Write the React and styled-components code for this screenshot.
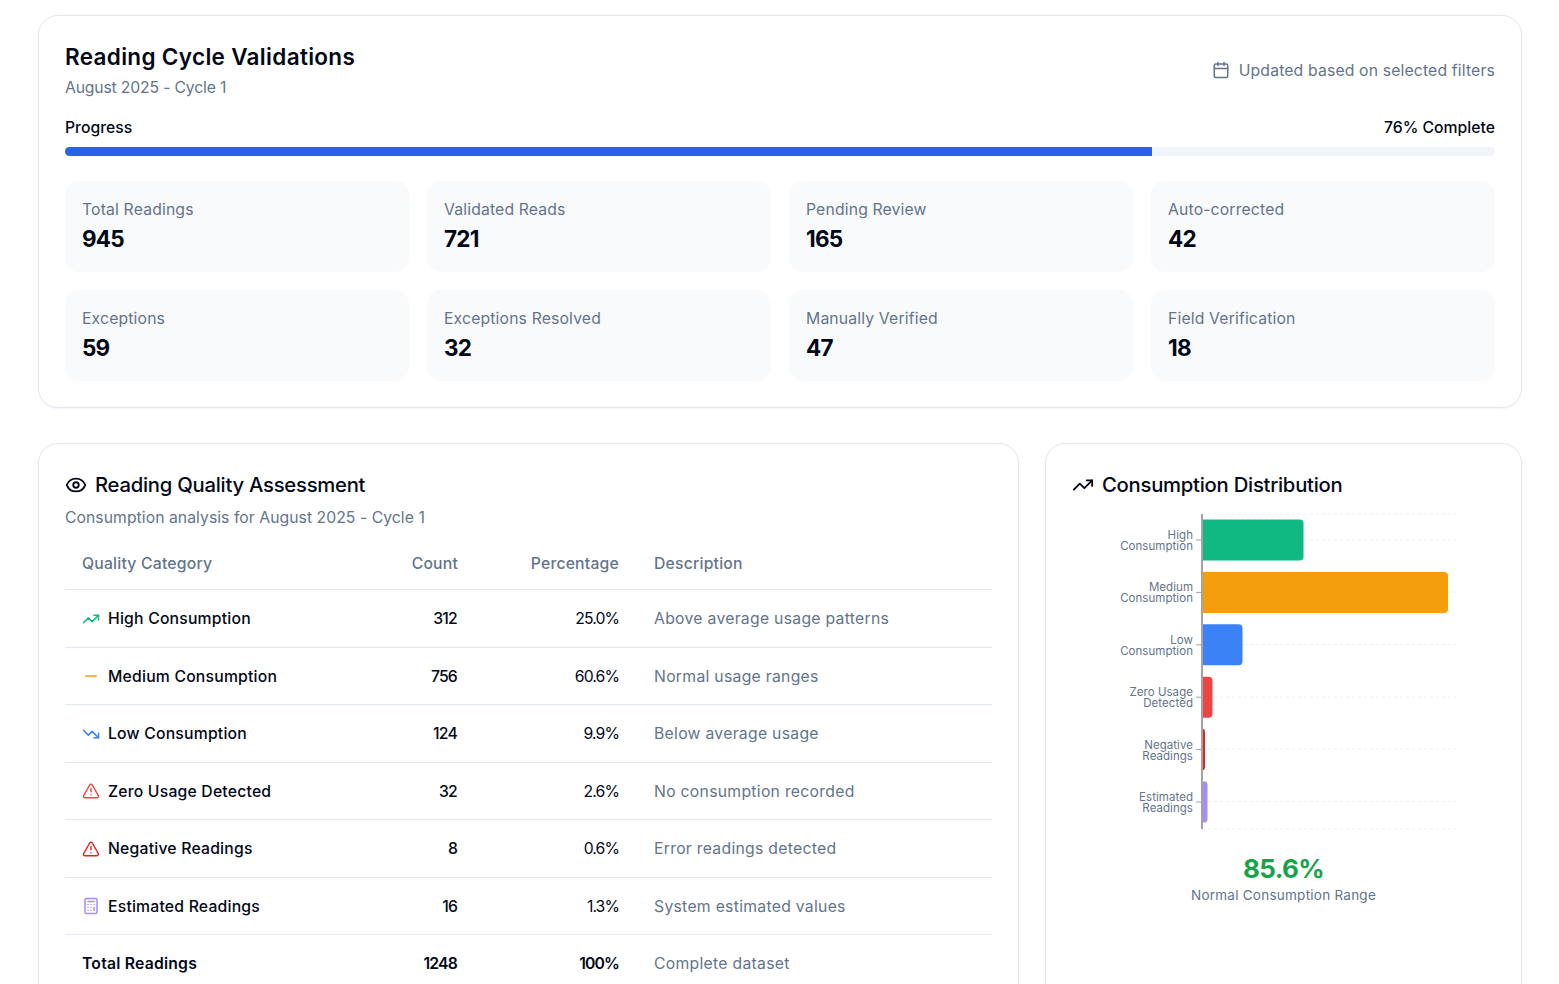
import styled, { createGlobalStyle } from "styled-components";
import { Calendar, Eye, TrendingUp, TrendingDown, Minus, TriangleAlert, Calculator } from "lucide-react";

const GlobalStyle = createGlobalStyle`
  html, body { margin: 0; padding: 0; background: #fff; height: 984px; overflow: hidden; }
  body { font-family: "Inter", "Open Sans", sans-serif; color: #020817; }
`;

const Page = styled.div`
  display: flex;
  flex-direction: column;
  gap: 35.5px;
  padding: 15px 37px 0 38px;
`;

const Card = styled.section`
  background: #fff;
  border: 1px solid #e2e8f0;
  border-radius: 20px;
  padding: 27px 26px 26px;
  box-shadow: 0 1px 2px rgba(15, 23, 42, 0.04);
`;

const CycleHead = styled.div`
  display: flex;
  justify-content: space-between;
  align-items: center;
`;

const Title = styled.h2`
  margin: 0;
  font-size: 22.5px;
  line-height: 28px;
  font-weight: 600;
  letter-spacing: 0.32px;
`;

const Sub = styled.p`
  margin: ${(p) => p.$top}px 0 0;
  font-size: 15.75px;
  line-height: 26px;
  color: #64748b;
  letter-spacing: ${(p) => p.$track}px;
`;

const Updated = styled.div`
  display: flex;
  align-items: center;
  gap: 9px;
  margin-bottom: 4px;
  font-size: 15.75px;
  color: #64748b;
  letter-spacing: 0.15px;
`;

const ProgressHead = styled.div`
  display: flex;
  justify-content: space-between;
  margin-top: 15px;
  font-size: 15.75px;
  line-height: 24px;
  font-weight: 500;
`;

const Track = styled.div`
  height: 9px;
  margin-top: 7px;
  border-radius: 9px;
  background: #f1f5f9;
  overflow: hidden;
`;

const Fill = styled.div`
  height: 100%;
  width: ${(p) => p.$pct}%;
  background: #2563eb;
`;

const StatGrid = styled.div`
  display: grid;
  grid-template-columns: repeat(4, 1fr);
  gap: 18.5px 18px;
  margin-top: 25px;
`;

const Stat = styled.div`
  height: 90.5px;
  box-sizing: border-box;
  padding: 17px 17px 0;
  border-radius: 14px;
  background: #f9fafb;
`;

const StatLabel = styled.div`
  font-size: 15.75px;
  line-height: 24px;
  color: #64748b;
  letter-spacing: 0.15px;
`;

const StatValue = styled.div`
  margin-top: 1px;
  font-size: 22.5px;
  line-height: 32px;
  font-weight: 700;
  letter-spacing: -0.8px;
`;

const Bottom = styled.div`
  display: grid;
  grid-template-columns: 981px 477px;
  gap: 26px;
`;

const CardHead = styled.div`
  display: flex;
  align-items: center;
  gap: 8px;
`;

const CardTitle = styled.h3`
  margin: 0;
  font-size: 20.25px;
  line-height: 28px;
  font-weight: 500;
  letter-spacing: -0.25px;
`;

const Table = styled.div`
  margin-top: 7px;
`;

const Row = styled.div`
  display: grid;
  grid-template-columns: 311px 100px 161px 1fr;
  align-items: center;
  height: ${(p) => (p.$head ? "52px" : "57.5px")};
  box-sizing: border-box;
  padding-top: ${(p) => (p.$head || p.$last ? 0 : 1)}px;
  border-bottom: ${(p) => (p.$last ? "none" : "1px solid #e2e8f0")};
  font-size: 15.75px;
`;

const Category = styled.div`
  display: flex;
  align-items: center;
  gap: 8px;
  padding-left: 17px;
  font-weight: ${(p) => (p.$total ? 600 : 500)};
  letter-spacing: 0.2px;
`;

const Count = styled.div`
  padding-right: 19px;
  text-align: right;
  font-weight: ${(p) => (p.$total ? 600 : 500)};
  letter-spacing: -0.8px;
`;

const Share = styled.div`
  padding-right: 18px;
  text-align: right;
  font-weight: ${(p) => (p.$total ? 600 : 400)};
  letter-spacing: -0.9px;
`;

const Desc = styled.div`
  padding-left: 17px;
  color: #64748b;
  letter-spacing: 0.28px;
`;

const HeadCell = styled.div`
  padding: ${(p) => (p.$right ? "0 18px 0 0" : "0 0 0 17px")};
  text-align: ${(p) => (p.$right ? "right" : "left")};
  color: #64748b;
  font-weight: 500;
  letter-spacing: 0.2px;
`;

const ChartSvg = styled.svg`
  display: block;
  width: 423px;
  height: 330px;
  margin-top: 11px;
`;

const AxisLabel = styled.text`
  font-size: 11.5px;
  fill: #64748b;
  text-anchor: end;
  letter-spacing: 0.05px;
`;

const Summary = styled.div`
  margin-top: 12px;
  text-align: center;
`;

const SummaryValue = styled.div`
  font-size: 26px;
  line-height: 33px;
  font-weight: 700;
  color: #16a34a;
  letter-spacing: -0.6px;
`;

const SummaryLabel = styled.div`
  font-size: 13.5px;
  line-height: 20px;
  color: #64748b;
  letter-spacing: 0.25px;
`;

const stats = [
  ["Total Readings", 945],
  ["Validated Reads", 721],
  ["Pending Review", 165],
  ["Auto-corrected", 42],
  ["Exceptions", 59],
  ["Exceptions Resolved", 32],
  ["Manually Verified", 47],
  ["Field Verification", 18],
];

const rows = [
  { name: "High Consumption", icon: TrendingUp, color: "#10b981", count: 312, pct: "25.0%", desc: "Above average usage patterns" },
  { name: "Medium Consumption", icon: Minus, color: "#f59e0b", count: 756, pct: "60.6%", desc: "Normal usage ranges" },
  { name: "Low Consumption", icon: TrendingDown, color: "#3b82f6", count: 124, pct: "9.9%", desc: "Below average usage" },
  { name: "Zero Usage Detected", icon: TriangleAlert, color: "#ef4444", count: 32, pct: "2.6%", desc: "No consumption recorded" },
  { name: "Negative Readings", icon: TriangleAlert, color: "#dc2626", count: 8, pct: "0.6%", desc: "Error readings detected" },
  { name: "Estimated Readings", icon: Calculator, color: "#a78bfa", count: 16, pct: "1.3%", desc: "System estimated values" },
];

// chart coordinates: x from the axis, y from the top of the plot
const bars = [
  { lines: ["High", "Consumption"], w: 101.5, color: "#10b981" },
  { lines: ["Medium", "Consumption"], w: 246, color: "#f59e0b" },
  { lines: ["Low", "Consumption"], w: 40.5, color: "#3b82f6" },
  { lines: ["Zero Usage", "Detected"], w: 10.5, color: "#ef4444" },
  { lines: ["Negative", "Readings"], w: 3, color: "#dc2626" },
  { lines: ["Estimated", "Readings"], w: 5.5, color: "#a78bfa" },
];

const AXIS_X = 130;
const STEP = 52.4;
const TOP = 4;

function Chart() {
  return (
    <ChartSvg viewBox="0 0 423 330">
      {[0, 26, 78, 130.5, 183, 235, 287.5, 315].map((y) => (
        <line key={y} x1={AXIS_X} x2={388} y1={TOP + y} y2={TOP + y} stroke="#eef0f3" strokeDasharray="3 3" />
      ))}
      {bars.map((b, i) => {
        const mid = TOP + 26 + i * STEP;
        const r = Math.min(4, b.w / 2);
        return (
          <g key={b.lines[0]}>
            <path
              d={`M${AXIS_X} ${mid - 20.5}h${b.w - r}q${r} 0 ${r} 4v33q0 4 -${r} 4h-${b.w - r}z`}
              fill={b.color}
            />
            <line x1={AXIS_X - 6} x2={AXIS_X} y1={mid} y2={mid} stroke="#9ca3af" />
            <AxisLabel x={AXIS_X - 9} y={mid - 1}>{b.lines[0]}</AxisLabel>
            <AxisLabel x={AXIS_X - 9} y={mid + 10}>{b.lines[1]}</AxisLabel>
          </g>
        );
      })}
      <line x1={AXIS_X} x2={AXIS_X} y1={TOP} y2={TOP + 315} stroke="#a3a3a3" strokeWidth="2" />
    </ChartSvg>
  );
}

export default function App() {
  return (
    <>
      <GlobalStyle />
      <Page>
        <Card>
          <CycleHead>
            <div>
              <Title>Reading Cycle Validations</Title>
              <Sub $top={4} $track={-0.17}>August 2025 - Cycle 1</Sub>
            </div>
            <Updated>
              <Calendar size={18} />
              Updated based on selected filters
            </Updated>
          </CycleHead>
          <ProgressHead>
            <span>Progress</span>
            <span>76% Complete</span>
          </ProgressHead>
          <Track>
            <Fill $pct={76} />
          </Track>
          <StatGrid>
            {stats.map(([label, value]) => (
              <Stat key={label}>
                <StatLabel>{label}</StatLabel>
                <StatValue>{value}</StatValue>
              </Stat>
            ))}
          </StatGrid>
        </Card>
        <Bottom>
          <Card>
            <CardHead>
              <Eye size={22} />
              <CardTitle>Reading Quality Assessment</CardTitle>
            </CardHead>
            <Sub $top={6} $track={0.04}>Consumption analysis for August 2025 - Cycle 1</Sub>
            <Table>
              <Row $head>
                <HeadCell>Quality Category</HeadCell>
                <HeadCell $right>Count</HeadCell>
                <HeadCell $right>Percentage</HeadCell>
                <HeadCell>Description</HeadCell>
              </Row>
              {rows.map((r) => {
                const Icon = r.icon;
                return (
                  <Row key={r.name}>
                    <Category>
                      <Icon size={18} color={r.color} />
                      {r.name}
                    </Category>
                    <Count>{r.count}</Count>
                    <Share>{r.pct}</Share>
                    <Desc>{r.desc}</Desc>
                  </Row>
                );
              })}
              <Row $last>
                <Category $total>Total Readings</Category>
                <Count $total>1248</Count>
                <Share $total>100%</Share>
                <Desc>Complete dataset</Desc>
              </Row>
            </Table>
          </Card>
          <Card>
            <CardHead>
              <TrendingUp size={22} />
              <CardTitle>Consumption Distribution</CardTitle>
            </CardHead>
            <Chart />
            <Summary>
              <SummaryValue>85.6%</SummaryValue>
              <SummaryLabel>Normal Consumption Range</SummaryLabel>
            </Summary>
          </Card>
        </Bottom>
      </Page>
    </>
  );
}
